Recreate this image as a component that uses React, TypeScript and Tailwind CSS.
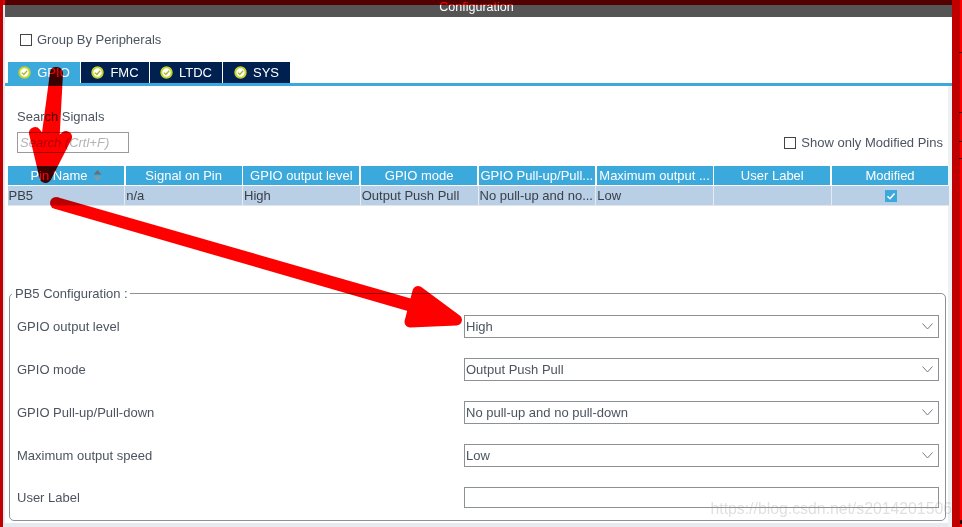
export default function App() {
  const heads = ["Pin Name", "Signal on Pin", "GPIO output level", "GPIO mode", "GPIO Pull-up/Pull...", "Maximum output ...", "User Label", "Modified"];
  const cells = ["PB5", "n/a", "High", "Output Push Pull", "No pull-up and no...", "Low", "", ""];
  const fields = [
    ["GPIO output level", "High"],
    ["GPIO mode", "Output Push Pull"],
    ["GPIO Pull-up/Pull-down", "No pull-up and no pull-down"],
    ["Maximum output speed", "Low"],
  ];
  const tabs = [
    ["GPIO", "w-[72px] bg-[#3ba9dc]"],
    ["FMC", "w-[68px] bg-[#00204f]"],
    ["LTDC", "w-[72px] bg-[#00204f]"],
    ["SYS", "w-[67px] bg-[#00204f]"],
  ];
  return (
    <div className="relative flex h-[527px] w-[962px] overflow-hidden bg-white font-['Liberation_Sans',Arial,sans-serif] text-[13px] text-[#4c5460]">
      <div className="w-[3px] shrink-0 bg-[#c00000]" />
      <div className="w-[2px] shrink-0 bg-[#e6eaee]" />
      <div className="flex min-w-0 flex-1 flex-col">
        <div className="flex h-[17px] shrink-0 items-start justify-center bg-[#555555] pr-[4px] text-[12.5px] text-[#ffffff]">
          <span className="leading-[15px]">Configuration</span>
        </div>
        <label className="ml-[15px] mt-[17px] flex h-[12px] items-center gap-[5px]">
          <span className="h-[12px] w-[12px] border border-[#444444] bg-white" />
          <span>Group By Peripherals</span>
        </label>
        <div className="ml-[3px] mt-[16px] flex h-[21px] gap-px text-white">
          {tabs.map(([t, c]) => (
            <div key={t} className={`flex items-center justify-center gap-[6px] ${c}`}>
              <svg width="13" height="13" viewBox="0 0 13 13">
                <circle cx="6.5" cy="6.5" r="5.2" fill="#ffffff" stroke="#c3d52c" strokeWidth="2" />
                <path d="M3.8 6.6 5.8 8.5 9.2 4.7" fill="none" stroke="#a9b82c" strokeWidth="1.3" />
              </svg>
              <span>{t}</span>
            </div>
          ))}
        </div>
        <div className="flex min-h-0 flex-1 flex-col">
          <div className="h-[3px] shrink-0 bg-[#3ba9dc]" />
          <div className="flex flex-1 border-r-[4px] border-[#eef1f3]">
            <div className="flex min-w-0 flex-1 flex-col">
              <div className="ml-[12px] mt-[23px] h-[15px] leading-[15px]">Search Signals</div>
              <div className="mr-[5px] mt-[8px] flex h-[21px] items-center justify-between pl-[12px]">
                <div className="flex h-[21px] w-[112px] items-center border border-[#9a9a9a] pl-[2px] italic text-[#b4b4b4]">Search (Crtl+F)</div>
                <label className="flex items-center gap-[5px]">
                  <span className="h-[12px] w-[12px] border border-[#444444] bg-white" />
                  <span>Show only Modified Pins</span>
                </label>
              </div>
              <div className="ml-[3px] mt-[13px] grid w-[940px] grid-cols-8 gap-x-[1.8px] bg-white">
                {heads.map((h, i) => (
                  <div key={h} className="flex h-[19px] items-center justify-center overflow-hidden whitespace-nowrap bg-[#3ba9dc] text-white">
                    <span>{h}</span>
                    {i === 0 && (
                      <svg className="ml-[5px]" width="9" height="11" viewBox="0 0 9 11">
                        <path d="M4.5 0 8.5 4.5H.5Z" fill="#6c6f72" />
                        <path d="M4.5 11 8.5 6.5H.5Z" fill="#7f9cae" />
                      </svg>
                    )}
                  </div>
                ))}
              </div>
              <div className="ml-[2.5px] mt-px grid w-[941px] grid-cols-8 gap-x-px border-b border-[#e0e6ec] bg-[#e6ebf0]">
                {cells.map((c, i) => (
                  <div key={i} className="flex h-[19px] items-center whitespace-nowrap bg-[#b8cfe6] pl-px text-[#3a3f48]">
                    {i === 7 ? (
                      <span className="mx-auto flex h-[12px] w-[12px] items-center justify-center bg-[#3ba9dc]">
                        <svg width="10" height="10" viewBox="0 0 10 10">
                          <path d="M1.5 5.2 4 7.7 8.5 2.5" fill="none" stroke="#ffffff" strokeWidth="1.6" />
                        </svg>
                      </span>
                    ) : c}
                  </div>
                ))}
              </div>
              <div className="relative ml-[4px] mr-[2px] mt-[87px] h-[228px] rounded-[5px] border border-[#8c9196]">
                <div className="absolute left-[2px] top-[-8px] bg-white pl-[3px] pr-[2px] leading-[15px]">PB5 Configuration :</div>
                <div className="flex flex-col gap-[21px] pl-[7px] pr-[6px] pt-[21px]">
                  {fields.map(([l, v]) => (
                    <div key={l} className="flex h-[22px] items-center justify-between">
                      <span className="mt-[1px]">{l}</span>
                      <div className="flex h-[23px] w-[475px] items-center justify-between border border-[#8c9196] pl-[1px] pr-[5px]">
                        <span className="mt-[1px]">{v}</span>
                        <svg width="11" height="7" viewBox="0 0 11 7">
                          <path d="M.5.5 5.5 6 10.5.5" fill="none" stroke="#777c80" strokeWidth="1" />
                        </svg>
                      </div>
                    </div>
                  ))}
                  <div className="flex h-[20px] items-center justify-between">
                    <span className="mt-[1px]">User Label</span>
                    <div className="h-[21px] w-[475px] border border-[#8c9196]" />
                  </div>
                </div>
              </div>
              <div className="mt-[2px] flex-1 bg-[#e6eaee]" />
            </div>
          </div>
        </div>
      </div>
      <div className="w-[8px] shrink-0 bg-[#c00000]" />
      <div className="w-[2px] shrink-0 bg-[#ff0000]" />

      <div className="absolute right-[10px] top-[499px] text-[15.8px] leading-[20px] text-[#9a9a9a] opacity-30 blur-[0.4px]">https://blog.csdn.net/s2014201506</div>

      <div className="absolute inset-x-0 top-0 h-[5px] bg-[#ff0000] mix-blend-multiply" />

      <svg className="absolute inset-0 mix-blend-multiply" width="962" height="527" viewBox="0 0 962 527">
        <path
          fill="#ff0000"
          stroke="#ff0000"
          strokeLinejoin="round"
          strokeWidth="12"
          d="M56 73 57 73 53 148 66 137 45.5 177 35 133 46 148Z"
        />
        <g fill="#ff0000" stroke="#ff0000" strokeLinecap="round" strokeLinejoin="round">
          <circle cx="56" cy="203" r="6" stroke="none" />
          <path d="M57.5 197.2 423 302 418 314 54.5 208.8Z" stroke="none" />
          <path d="M418 291.5 456.5 320 410 322Z" strokeWidth="11" />
        </g>
        <g fill="#222222" stroke="none">
          <rect x="959" y="52" width="3" height="1" />
          <rect x="959" y="112" width="3" height="1" />
          <rect x="959" y="141" width="3" height="1" />
          <rect x="959" y="158" width="3" height="1" />
          <rect x="960" y="520" width="2" height="4" />
        </g>
      </svg>
    </div>
  );
}
